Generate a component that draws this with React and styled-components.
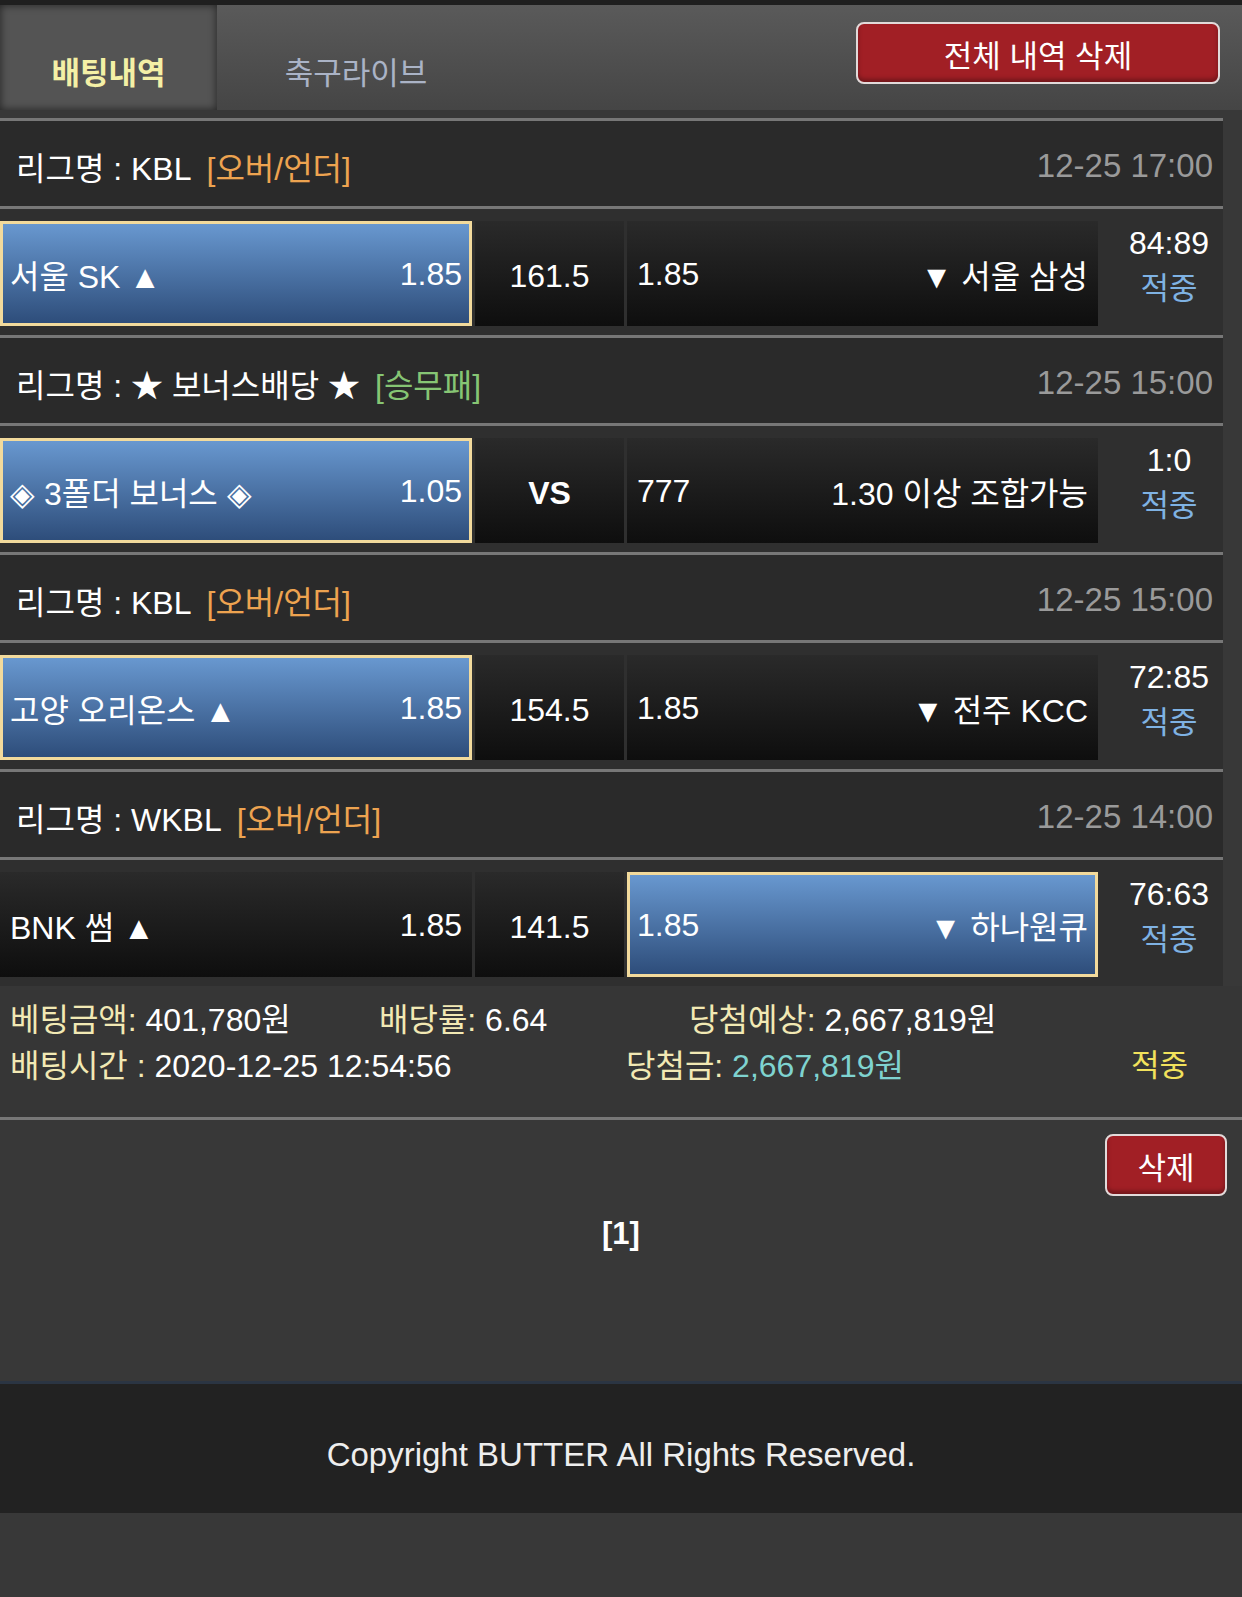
import styled, { createGlobalStyle } from 'styled-components'

const GlobalStyle = createGlobalStyle`
  body {
    margin: 0;
    background: #383838;
    color: #fff;
    font-family: "Liberation Sans", "Noto Sans CJK KR", sans-serif;
  }
`;

const TopBar = styled.header`
  display: flex;
  height: 105px;
  border-top: 5px solid #1f1f1f;
  background: linear-gradient(#5a5a5a, #454545);
`;

const Tab = styled.div`
  width: ${p => p.$w}px;
  display: flex;
  align-items: center;
  justify-content: center;
  padding-top: 26px;
  box-sizing: border-box;
  font-size: 31px;
  font-weight: ${p => (p.$active ? 700 : 400)};
  color: ${p => (p.$active ? '#f4f0a6' : '#aab3c6')};
  background: ${p => (p.$active ? '#545454' : 'transparent')};
  box-shadow: ${p => (p.$active ? 'inset 0 0 8px rgba(0,0,0,.6)' : 'none')};
`;

const RedButton = styled.button`
  margin: ${p => p.$m};
  width: ${p => p.$w}px;
  height: 62px;
  box-sizing: border-box;
  border: 2px solid #e2dada;
  border-radius: 8px;
  background: #a11f25;
  box-shadow: inset 0 -3px 4px rgba(0,0,0,.3);
  color: #fff;
  font-family: inherit;
  font-size: 31px;
  padding: 0;
`;

const List = styled.section`
  margin-top: 8px;
  width: 1223px;
  background: #2f2f2f;
`;

const LeagueHead = styled.div`
  height: 85px;
  display: flex;
  align-items: center;
  padding: 4px 10px 0 16px;
  box-sizing: border-box;
  background: #2a2a2a;
  border-top: 3px solid #777;
  border-bottom: 3px solid #777;
  box-sizing: content-box;
  height: 81px;
  font-size: 32px;
`;

const Tag = styled.span`
  margin-left: 15px;
  color: ${p => p.$c};
`;

const Time = styled.span`
  margin-left: auto;
  color: #9a9a9a;
  font-size: 33px;
`;

const MatchRow = styled.div`
  height: 126px;
  box-sizing: border-box;
  padding-top: 12px;
  display: flex;
  align-items: flex-start;
  gap: 3px;
`;

const Pick = styled.div`
  width: ${p => p.$w}px;
  height: 105px;
  box-sizing: border-box;
  padding: 0 10px;
  display: flex;
  align-items: center;
  justify-content: ${p => (p.$center ? 'center' : 'space-between')};
  background: ${p => (p.$on
    ? 'linear-gradient(#6a9ad2, #2c4b78)'
    : 'linear-gradient(#2a2a2a, #0e0e0e)')};
  box-shadow: ${p => (p.$on ? 'inset 0 0 0 3px #f2da9c' : 'none')};
  font-size: 32px;
  white-space: nowrap;
`;

const Odds = styled.span`
  font-size: 32px;
  padding-top: 2px;
`;

const Mid = styled.span`
  font-size: 32px;
  font-weight: ${p => (p.$bold ? 700 : 400)};
  padding-top: 6px;
`;

const Score = styled.div`
  flex: 1;
  height: 105px;
  display: flex;
  flex-direction: column;
  align-items: center;
  justify-content: center;
  padding-left: 14px;
  margin-top: -8px;
  line-height: 46px;
`;

const ScoreNum = styled.span`
  font-size: 32px;
`;

const Hit = styled.span`
  font-size: 31px;
  color: ${p => p.$c};
`;

const Summary = styled.div`
  padding: 11px 0 28px 10px;
  background: #363636;
  border-bottom: 3px solid #777;
  font-size: 32px;
  line-height: 46px;
`;

const SumRow = styled.div`
  display: grid;
  grid-template-columns: ${p => p.$cols};
  white-space: nowrap;
`;

const Label = styled.span`
  color: #f2e9b4;
`;

const Value = styled.span`
  color: ${p => p.$c || '#fff'};
`;

const Pager = styled.div`
  height: 261px;
  display: flex;
  flex-direction: column;
  align-items: flex-end;
`;

const PageNum = styled.div`
  align-self: stretch;
  text-align: center;
  margin-top: 18px;
  font-size: 31px;
  font-weight: 700;
  line-height: 40px;
`;

const Footer = styled.footer`
  height: 117px;
  padding-top: 12px;
  border-top: 3px solid #2b3543;
  background: #222;
  display: flex;
  align-items: center;
  justify-content: center;
  font-size: 33px;
  color: #eee;
`;

const ORANGE = '#eda350';
const GREEN = '#86c574';

const games = [
  { league: 'KBL', tag: '[오버/언더]', tc: ORANGE, time: '12-25 17:00', home: '서울 SK ▲', ho: '1.85', mid: '161.5', ao: '1.85', away: '▼ 서울 삼성', pick: 'home', score: '84:89' },
  { league: '★ 보너스배당 ★', tag: '[승무패]', tc: GREEN, time: '12-25 15:00', home: '◈ 3폴더 보너스 ◈', ho: '1.05', mid: 'VS', ao: '777', away: '1.30 이상 조합가능', pick: 'home', score: '1:0' },
  { league: 'KBL', tag: '[오버/언더]', tc: ORANGE, time: '12-25 15:00', home: '고양 오리온스 ▲', ho: '1.85', mid: '154.5', ao: '1.85', away: '▼ 전주 KCC', pick: 'home', score: '72:85' },
  { league: 'WKBL', tag: '[오버/언더]', tc: ORANGE, time: '12-25 14:00', home: 'BNK 썸 ▲', ho: '1.85', mid: '141.5', ao: '1.85', away: '▼ 하나원큐', pick: 'away', score: '76:63' },
]

export default function App() {
  return (
    <>
      <GlobalStyle />
      <TopBar>
        <Tab $w={217} $active>배팅내역</Tab>
        <Tab $w={278}>축구라이브</Tab>
        <RedButton $w={364} $m="17px 22px 0 auto">전체 내역 삭제</RedButton>
      </TopBar>

      <List>
        {games.map((g, i) => (
          <div key={i}>
            <LeagueHead>
              리그명 : {g.league}
              <Tag $c={g.tc}>{g.tag}</Tag>
              <Time>{g.time}</Time>
            </LeagueHead>
            <MatchRow>
              <Pick $w={472} $on={g.pick === 'home'}>
                <span>{g.home}</span>
                <Odds>{g.ho}</Odds>
              </Pick>
              <Pick $w={149} $center>
                <Mid $bold={g.mid === 'VS'}>{g.mid}</Mid>
              </Pick>
              <Pick $w={471} $on={g.pick === 'away'}>
                <Odds>{g.ao}</Odds>
                <span>{g.away}</span>
              </Pick>
              <Score>
                <ScoreNum>{g.score}</ScoreNum>
                <Hit $c="#7fb2e3">적중</Hit>
              </Score>
            </MatchRow>
          </div>
        ))}
      </List>

      <Summary>
        <SumRow $cols="369px 310px 1fr">
          <span><Label>베팅금액:</Label> <Value>401,780원</Value></span>
          <span><Label>배당률:</Label> <Value>6.64</Value></span>
          <span><Label>당첨예상:</Label> <Value>2,667,819원</Value></span>
        </SumRow>
        <SumRow $cols="616px 505px 1fr">
          <span><Label>배팅시간 :</Label> <Value>2020-12-25 12:54:56</Value></span>
          <span><Label>당첨금:</Label> <Value $c="#7fd3d0">2,667,819원</Value></span>
          <Hit $c="#f2e25c">적중</Hit>
        </SumRow>
      </Summary>

      <Pager>
        <RedButton $w={122} $m="14px 15px 0 0">삭제</RedButton>
        <PageNum>[1]</PageNum>
      </Pager>

      <Footer>Copyright BUTTER All Rights Reserved.</Footer>
    </>
  )
}
